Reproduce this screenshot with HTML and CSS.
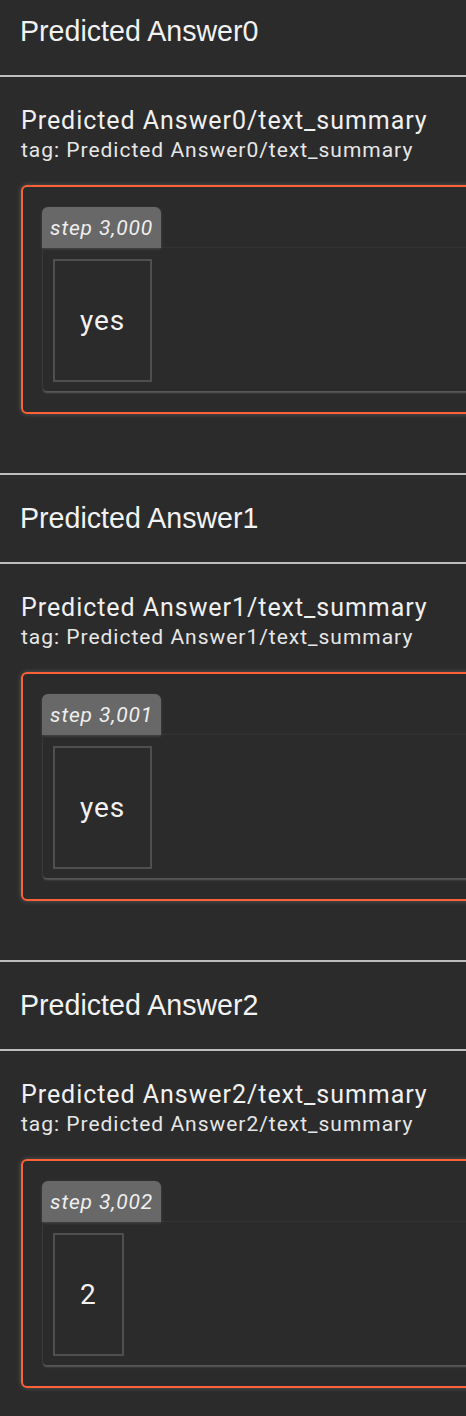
FILE: index.html
```html
<!DOCTYPE html>
<html lang="en">
<head>
<meta charset="utf-8">
<title>Text summaries</title>
<link rel="stylesheet" href="styles.css">
</head>
<body>
<main class="page">
  <section class="category">
    <div class="category-header">Predicted Answer0</div>
    <div class="category-body">
      <div class="card-title">Predicted Answer0/text_summary</div>
      <div class="card-tag">tag: Predicted Answer0/text_summary</div>
      <div class="card">
        <div class="step-chip">step 3,000</div>
        <div class="step-panel">
          <div class="cell">yes</div>
        </div>
      </div>
    </div>
  </section>
  <section class="category">
    <div class="category-header">Predicted Answer1</div>
    <div class="category-body">
      <div class="card-title">Predicted Answer1/text_summary</div>
      <div class="card-tag">tag: Predicted Answer1/text_summary</div>
      <div class="card">
        <div class="step-chip">step 3,001</div>
        <div class="step-panel">
          <div class="cell">yes</div>
        </div>
      </div>
    </div>
  </section>
  <section class="category">
    <div class="category-header">Predicted Answer2</div>
    <div class="category-body">
      <div class="card-title">Predicted Answer2/text_summary</div>
      <div class="card-tag">tag: Predicted Answer2/text_summary</div>
      <div class="card">
        <div class="step-chip">step 3,002</div>
        <div class="step-panel">
          <div class="cell">2</div>
        </div>
      </div>
    </div>
  </section>
</main>
</body>
</html>
```
FILE: styles.css
```css
html, body {
  margin: 0;
  padding: 0;
  background: #2b2b2b;
  overflow: hidden;
}
body {
  font-family: Roboto, "Liberation Sans", Arial, sans-serif;
  color: #ececec;
  letter-spacing: 0.875px;
}
.page {
  margin-top: -14px;
}
.category {
  border-top: 2px solid #bdbdbd;
}
.category-header {
  height: 87px;
  display: flex;
  align-items: center;
  padding-left: 20px;
  font-family: "Liberation Sans", Arial, sans-serif;
  font-size: 28.6px;
  letter-spacing: 0;
  color: #f2f2f2;
  border-bottom: 2px solid #bdbdbd;
}
.category-body {
  padding: 29px 0 59px 21px;
}
.card-title {
  font-size: 25px;
  line-height: 30px;
  letter-spacing: 0.95px;
  color: #f0f0f0;
}
.card-tag {
  font-size: 21px;
  line-height: 28px;
  letter-spacing: 0.98px;
  color: #e6e6e6;
}
.card {
  margin-top: 21px;
  width: 520px;
  border: 2px solid #fc6238;
  border-radius: 6px;
  padding: 20px 19px 21px 19px;
  box-shadow: 0 0 5px rgba(255, 255, 255, 0.22);
  display: flex;
  flex-direction: column;
  align-items: flex-start;
}
.step-chip {
  height: 41px;
  box-sizing: border-box;
  padding: 0 8px;
  display: flex;
  align-items: center;
  background: #686868;
  border-radius: 6px 6px 0 0;
  font-size: 21px;
  font-style: italic;
  color: #efefef;
  box-shadow: 0 1px 3px rgba(255, 255, 255, 0.15);
  position: relative;
  z-index: 1;
}
.step-panel {
  align-self: stretch;
  margin-left: 1px;
  padding: 11px 10px 9px 10px;
  border-radius: 0 0 4px 4px;
  box-shadow: 0 -1px 2px rgba(255, 255, 255, 0.05), 0 2px 2px rgba(255, 255, 255, 0.22);
  display: flex;
}
.cell {
  height: 123px;
  box-sizing: border-box;
  padding: 0 25px;
  display: flex;
  align-items: center;
  border: 2px solid #4f4f4f;
  font-size: 28px;
  color: #f2f2f2;
}
```
